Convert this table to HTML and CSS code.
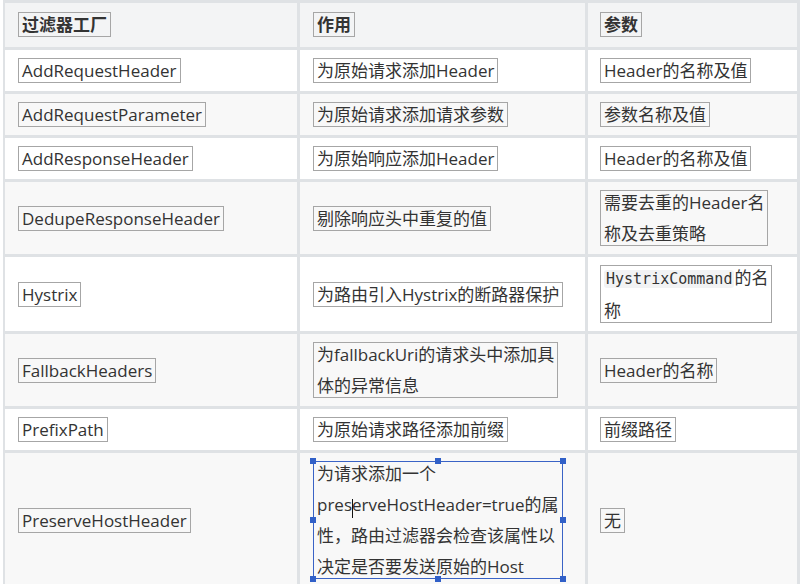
FILE: index.html
```html
<!DOCTYPE html>
<html lang="zh-CN">
<head>
<meta charset="utf-8">
<title>过滤器工厂</title>
<link rel="stylesheet" href="styles.css">
</head>
<body>
<table class="filters">
  <thead>
    <tr>
      <th class="c1"><span class="box">过滤器工厂</span></th>
      <th class="c2"><span class="box">作用</span></th>
      <th class="c3"><span class="box">参数</span></th>
    </tr>
  </thead>
  <tbody>
    <tr>
      <td><span class="box">AddRequestHeader</span></td>
      <td><span class="box">为原始请求添加Header</span></td>
      <td class="c3"><span class="box">Header的名称及值</span></td>
    </tr>
    <tr>
      <td><span class="box">AddRequestParameter</span></td>
      <td><span class="box">为原始请求添加请求参数</span></td>
      <td class="c3"><span class="box">参数名称及值</span></td>
    </tr>
    <tr>
      <td><span class="box">AddResponseHeader</span></td>
      <td><span class="box">为原始响应添加Header</span></td>
      <td class="c3"><span class="box">Header的名称及值</span></td>
    </tr>
    <tr>
      <td><span class="box">DedupeResponseHeader</span></td>
      <td><span class="box">剔除响应头中重复的值</span></td>
      <td class="c3"><span class="box">需要去重的Header名<br>称及去重策略</span></td>
    </tr>
    <tr>
      <td><span class="box">Hystrix</span></td>
      <td><span class="box">为路由引入Hystrix的断路器保护</span></td>
      <td class="c3"><span class="box"><code>HystrixCommand</code>的名<br>称</span></td>
    </tr>
    <tr>
      <td><span class="box">FallbackHeaders</span></td>
      <td><span class="box">为fallbackUri的请求头中添加具<br>体的异常信息</span></td>
      <td class="c3"><span class="box">Header的名称</span></td>
    </tr>
    <tr>
      <td><span class="box">PrefixPath</span></td>
      <td><span class="box">为原始请求路径添加前缀</span></td>
      <td class="c3"><span class="box">前缀路径</span></td>
    </tr>
    <tr>
      <td><span class="box">PreserveHostHeader</span></td>
      <td><span class="box selected">为请求添加一个<br>pre<span class="caret">s</span>erveHostHeader=true的属<br>性，路由过滤器会检查该属性以<br>决定是否要发送原始的Host<span class="sel"><i class="h tl"></i><i class="h tm"></i><i class="h tr"></i><i class="h ml"></i><i class="h mr"></i><i class="h bl"></i><i class="h bm"></i><i class="h br"></i></span></span></td>
      <td class="c3"><span class="box">无</span></td>
    </tr>
  </tbody>
</table>
</body>
</html>
```

FILE: styles.css
```css
html, body {
  margin: 0;
  padding: 0;
  background: #ffffff;
}

body {
  font-family: "Open Sans", "Noto Sans CJK SC", sans-serif;
  font-size: 17px;
  color: #333333;
}

.filters {
  margin-left: 3px;
  width: 797px;
  table-layout: fixed;
  border-collapse: separate;
  border-spacing: 0;
  border-top: 3px solid #dfe2e5;
  border-left: 2px solid #dfe2e5;
}

.filters th,
.filters td {
  box-sizing: border-box;
  border-right: 3px solid #dfe2e5;
  border-bottom: 3px solid #dfe2e5;
  padding: 5px 13px 5px 13px;
  line-height: 31px;
  text-align: left;
  vertical-align: middle;
  font-weight: normal;
}

.filters th {
  padding-top: 6px;
  padding-bottom: 7px;
  font-weight: bold;
  background: #f3f4f5;
}

.filters th.c1 { width: 295px; }
.filters th.c2 { width: 288px; }
.filters th.c3 { width: 212px; }

.filters .c3 {
  padding-left: 12px;
}

.filters tbody tr:nth-child(2n) td {
  background: #f8f8f8;
}

.box {
  position: relative;
  display: inline-block;
  vertical-align: top;
  padding: 0 4px;
  white-space: nowrap;
}

.box::after {
  content: "";
  position: absolute;
  left: 0;
  right: 0;
  top: 3px;
  bottom: 3px;
  border: 1px solid #a6a6a6;
  pointer-events: none;
}

code {
  font-family: "DejaVu Sans Mono", "Liberation Mono", monospace;
  font-size: 15px;
  background: #f2f3f4;
  border-radius: 3px;
  padding: 0 2px;
}

.box.selected::after {
  display: none;
}

.sel {
  position: absolute;
  left: 0;
  right: 0;
  top: 3px;
  bottom: 3px;
  border: 1px solid #3a63c6;
}

.h {
  position: absolute;
  width: 6px;
  height: 6px;
  background: #3160c8;
}

.h.tl { left: -4px; top: -4px; }
.h.tm { left: calc(50% - 3px); top: -4px; }
.h.tr { right: -4px; top: -4px; }
.h.ml { left: -4px; top: calc(50% - 3px); }
.h.mr { right: -4px; top: calc(50% - 3px); }
.h.bl { left: -4px; bottom: -4px; }
.h.bm { left: calc(50% - 3px); bottom: -4px; }
.h.br { right: -4px; bottom: -4px; }

.caret {
  position: relative;
}

.caret::after {
  content: "";
  position: absolute;
  right: -1px;
  top: 6px;
  width: 1px;
  height: 19px;
  background: #111111;
}
```
